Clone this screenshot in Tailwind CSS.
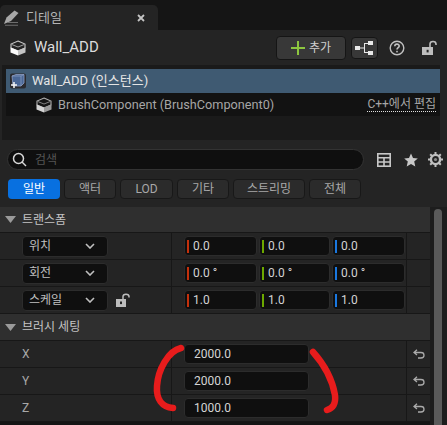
<!DOCTYPE html>
<html lang="ko">
<head>
    <meta charset="UTF-8" />
    <script src="https://cdn.jsdelivr.net/npm/@tailwindcss/browser@4"></script>
    <title>디테일</title>
</head>
<body class="bg-[#151515] text-[#c0c0c0] font-['Roboto','Noto_Sans_CJK_KR',sans-serif] text-[12px] overflow-hidden">
<div class="relative w-[447px] h-[425px] overflow-hidden">

    <!-- 탭 -->
    <div class="h-[30px] pt-[5px]">
        <div class="w-[158px] h-[25px] bg-[#242424] rounded-t-[5px] flex items-center pl-[3px] pr-[13px]">
            <svg width="16" height="16" viewBox="0 0 16 16" fill="#a8a8a8">
                <path d="M11.5 0.5 L15.5 3 L8 11 L1 14 L3.5 7.5 Z"/>
                <path d="M4 12 H15 V13 H4 Z M2 14.8 H15 V15.8 H2 Z" fill="#6e6e6e"/>
            </svg>
            <span class="ml-[7px] text-[13px] text-[#b4b4b4]">디테일</span>
            <svg width="8" height="8" viewBox="0 0 8 8" class="ml-auto" stroke="#c4c4c4" stroke-width="1.8"><path d="M1 1 L7 7 M7 1 L1 7"/></svg>
        </div>
    </div>

    <!-- 액터 헤더 -->
    <div class="h-[35px] bg-[#242424] flex items-center pl-[10px] pr-[9px]">
        <svg width="16" height="16" viewBox="0 0 16 16">
            <path d="M8 1 L15 4 V8 L8 11 L1 8 V4 Z" fill="#242424" stroke="#c8c8c8" stroke-width="1.1"/>
            <path d="M1.5 4.4 L8 7 L14.5 4.4" fill="none" stroke="#a0a0a0" stroke-width="1"/>
            <path d="M0.5 7.5 L8 10.5 V15.5 L0.5 12.4 Z" fill="#fafafa"/>
            <path d="M15.5 7.5 L8 10.5 V15.5 L15.5 12.4 Z" fill="#c4c4c4"/>
        </svg>
        <span class="ml-[8px] text-[15px] text-[#dcdcdc]">Wall_ADD</span>
        <div class="ml-auto flex items-center">
            <div class="w-[70px] h-[24px] bg-[#383838] border border-[#151515] rounded-[4px] flex items-center justify-center gap-[4px] text-[#d0d0d0]">
                <svg width="14" height="14" viewBox="0 0 14 14" fill="#8dc63f"><path d="M6 0 H8 V6 H14 V8 H8 V14 H6 V8 H0 V6 H6 Z"/></svg>
                <span class="text-[12px]">추가</span>
            </div>
            <div class="ml-[5px] w-[27px] h-[22px] bg-[#383838] border border-[#151515] rounded-[4px] flex items-center justify-center">
                <svg width="20" height="14" viewBox="0 0 20 14" fill="#e8e8e8">
                    <rect x="0" y="5" width="5" height="4"/><rect x="13" y="0" width="5" height="4"/><rect x="13" y="10" width="5" height="4"/>
                    <path d="M5 6.5 H9 V2 H13 V3 H10 V11 H13 V12 H9 V7.5 H5 Z"/>
                </svg>
            </div>
            <svg width="16" height="16" viewBox="0 0 16 16" class="ml-[11px]" fill="none" stroke="#c0c0c0" stroke-width="1.4">
                <circle cx="8" cy="8" r="6.8"/>
                <path d="M5.8 6.2 C5.8 3.4 10.2 3.4 10.2 6.1 C10.2 7.7 8 7.8 8 9.6" stroke-width="1.6"/>
                <rect x="7.2" y="10.8" width="1.6" height="1.6" fill="#c0c0c0" stroke="none"/>
            </svg>
            <svg width="16" height="16" viewBox="0 0 16 16" class="ml-[17px]">
                <rect x="0" y="7" width="11" height="8" fill="#bdbdbd"/>
                <rect x="4.6" y="9.8" width="2" height="2.6" fill="#242424"/>
                <path d="M8 7 V4 C8 0.6 14 0.6 14 4 V5" fill="none" stroke="#bdbdbd" stroke-width="1.6"/>
            </svg>
        </div>
    </div>

    <!-- 컴포넌트 트리 -->
    <div class="h-[75px] bg-[#242424] pl-[2px] pr-[7px]">
        <div class="h-[75px] bg-[#1a1a1a] pt-[4px] pl-[4px]">
            <div class="h-[24px] bg-[#3f5a72] flex items-center pl-[4px] text-[#e4e4e4]">
                <svg width="16" height="16" viewBox="0 0 16 16">
                    <rect x="0" y="0.5" width="16" height="15" rx="2" fill="#2a2a2e"/>
                    <path d="M2 3 L6 1.5 H14 V10 L11 13 H3 Z" fill="#4a6796" stroke="#8ea0c4" stroke-width="0.8"/>
                    <path d="M2 3 H11 V13 M11 3 L14 1.5" fill="none" stroke="#8ea0c4" stroke-width="0.7"/>
                    <path d="M1 12 H7 M4 9 V15" stroke="#f6f6f6" stroke-width="1.5"/>
                </svg>
                <span class="ml-[6px] text-[13px]">Wall_ADD (인스턴스)</span>
            </div>
            <div class="h-[23px] bg-[#121212] flex items-center pl-[30px] pr-[4px] text-[#a6a6a6]">
                <svg width="16" height="16" viewBox="0 0 16 16">
                    <path d="M8 1 L15 4 V8 L8 11 L1 8 V4 Z" fill="#151515" stroke="#b0b0b0" stroke-width="1.1"/>
                    <path d="M1.5 4.4 L8 7 L14.5 4.4" fill="none" stroke="#808080" stroke-width="1"/>
                    <path d="M0.5 7.5 L8 10.5 V15.5 L0.5 12.4 Z" fill="#d4d4d4"/>
                    <path d="M15.5 7.5 L8 10.5 V15.5 L15.5 12.4 Z" fill="#9a9a9a"/>
                </svg>
                <span class="ml-[6px] text-[12.7px]">BrushComponent (BrushComponent0)</span>
                <span class="ml-auto text-[12px] border-b border-dotted border-[#e0e0e0] leading-[14px]">C++에서 편집</span>
            </div>
        </div>
    </div>

    <!-- 검색 -->
    <div class="h-[39px] bg-[#242424] flex items-center pl-[7px] pr-[3px]">
        <div class="w-[357px] h-[21px] bg-[#0f0f0f] border border-[#333] rounded-full flex items-center pl-[4px]">
            <svg width="15" height="15" viewBox="0 0 15 15" fill="none" stroke="#d8d8d8" stroke-width="1.5">
                <circle cx="6.5" cy="6.5" r="5"/><path d="M10 10 L14 14"/>
            </svg>
            <span class="ml-[8px] text-[#555] text-[12px]">검색</span>
        </div>
        <svg width="14" height="14" viewBox="0 0 14 14" class="ml-[13px]" fill="none" stroke="#c8c8c8" stroke-width="1.6">
            <rect x="0.8" y="0.8" width="12.4" height="12.4"/>
            <path d="M0.8 4.8 H13.2 M0.8 9 H13.2 M7 4.8 V13.2"/>
        </svg>
        <svg width="14" height="14" viewBox="0 0 14 14" class="ml-[13px]" fill="#c8c8c8">
            <path d="M7 0.5 L9 5 L13.8 5.4 L10.2 8.6 L11.3 13.4 L7 10.9 L2.7 13.4 L3.8 8.6 L0.2 5.4 L5 5 Z"/>
        </svg>
        <svg width="15" height="15" viewBox="0 0 15 15" class="ml-[10px]" fill="none" stroke="#c0c0c0">
            <circle cx="7.5" cy="7.5" r="4.6" stroke-width="2.4"/>
            <circle cx="7.5" cy="7.5" r="1.6" fill="#8a8a8a" stroke="none"/>
            <path d="M7.5 0 V2.5 M7.5 12.5 V15 M0 7.5 H2.5 M12.5 7.5 H15 M2.2 2.2 L4 4 M11 11 L12.8 12.8 M12.8 2.2 L11 4 M4 11 L2.2 12.8" stroke-width="2"/>
        </svg>
    </div>

    <!-- 필터 -->
    <div class="h-[28px] bg-[#242424] pl-[8px] flex items-start gap-[4px] text-[12px] text-[#a8a8a8]">
        <div class="w-[52px] h-[20px] bg-[#0870e0] rounded-[4px] text-white flex items-center justify-center">일반</div>
        <div class="w-[52px] h-[20px] bg-[#2b2b2b] border border-[#181818] rounded-[4px] flex items-center justify-center">액터</div>
        <div class="w-[53px] h-[20px] bg-[#2b2b2b] border border-[#181818] rounded-[4px] flex items-center justify-center">LOD</div>
        <div class="w-[52px] h-[20px] bg-[#2b2b2b] border border-[#181818] rounded-[4px] flex items-center justify-center">기타</div>
        <div class="w-[72px] h-[20px] bg-[#2b2b2b] border border-[#181818] rounded-[4px] flex items-center justify-center">스트리밍</div>
        <div class="w-[52px] h-[20px] bg-[#2b2b2b] border border-[#181818] rounded-[4px] flex items-center justify-center">전체</div>
    </div>

    <!-- 프로퍼티 -->
    <div class="flex h-[218px]">
        <div class="w-[430px]">
            <div class="h-[26px] bg-[#2f2f2f] border-b border-[#171717] flex items-center pl-[5px] text-[#c4c4c4]">
                <svg width="11" height="7" viewBox="0 0 11 7" fill="#9a9a9a"><path d="M0 0 H11 L5.5 7 Z"/></svg>
                <span class="ml-[6px]">트랜스폼</span>
            </div>

            <div class="h-[27px] bg-[#242424] border-b border-[#171717] flex">
                <div class="w-[172px] border-r border-[#171717] pl-[22px] flex items-center">
                    <div class="w-[86px] h-[21px] bg-[#0f0f0f] border border-[#2c2c2c] rounded-[4px] flex items-center justify-between pl-[6px] pr-[12px]">
                        <span>위치</span>
                        <svg width="10" height="6" viewBox="0 0 10 6" fill="none" stroke="#c0c0c0" stroke-width="1.6"><path d="M1 1 L5 5 L9 1"/></svg>
                    </div>
                </div>
                <div class="w-[235px] border-r border-[#171717] pl-[12px] flex items-center gap-[2px] text-[#d4d4d4]">
                    <div class="w-[73px] h-[20px] bg-[#0f0f0f] border border-[#2c2c2c] rounded-[4px] flex items-center pl-[2px]"><i class="w-[2px] h-[13px] bg-[#c4300c]"></i><span class="ml-[4px]">0.0</span></div>
                    <div class="w-[71px] h-[20px] bg-[#0f0f0f] border border-[#2c2c2c] rounded-[4px] flex items-center pl-[2px]"><i class="w-[2px] h-[13px] bg-[#6ca800]"></i><span class="ml-[4px]">0.0</span></div>
                    <div class="w-[73px] h-[20px] bg-[#0f0f0f] border border-[#2c2c2c] rounded-[4px] flex items-center pl-[2px]"><i class="w-[2px] h-[13px] bg-[#1a78e0]"></i><span class="ml-[4px]">0.0</span></div>
                </div>
            </div>

            <div class="h-[27px] bg-[#242424] border-b border-[#171717] flex">
                <div class="w-[172px] border-r border-[#171717] pl-[22px] flex items-center">
                    <div class="w-[86px] h-[21px] bg-[#0f0f0f] border border-[#2c2c2c] rounded-[4px] flex items-center justify-between pl-[6px] pr-[12px]">
                        <span>회전</span>
                        <svg width="10" height="6" viewBox="0 0 10 6" fill="none" stroke="#c0c0c0" stroke-width="1.6"><path d="M1 1 L5 5 L9 1"/></svg>
                    </div>
                </div>
                <div class="w-[235px] border-r border-[#171717] pl-[12px] flex items-center gap-[2px] text-[#d4d4d4]">
                    <div class="w-[73px] h-[20px] bg-[#0f0f0f] border border-[#2c2c2c] rounded-[4px] flex items-center pl-[2px]"><i class="w-[2px] h-[13px] bg-[#c4300c]"></i><span class="ml-[4px]">0.0 °</span></div>
                    <div class="w-[71px] h-[20px] bg-[#0f0f0f] border border-[#2c2c2c] rounded-[4px] flex items-center pl-[2px]"><i class="w-[2px] h-[13px] bg-[#6ca800]"></i><span class="ml-[4px]">0.0 °</span></div>
                    <div class="w-[73px] h-[20px] bg-[#0f0f0f] border border-[#2c2c2c] rounded-[4px] flex items-center pl-[2px]"><i class="w-[2px] h-[13px] bg-[#1a78e0]"></i><span class="ml-[4px]">0.0 °</span></div>
                </div>
            </div>

            <div class="h-[27px] bg-[#242424] border-b border-[#171717] flex">
                <div class="w-[172px] border-r border-[#171717] pl-[22px] flex items-center">
                    <div class="w-[86px] h-[21px] bg-[#0f0f0f] border border-[#2c2c2c] rounded-[4px] flex items-center justify-between pl-[6px] pr-[12px]">
                        <span>스케일</span>
                        <svg width="10" height="6" viewBox="0 0 10 6" fill="none" stroke="#c0c0c0" stroke-width="1.6"><path d="M1 1 L5 5 L9 1"/></svg>
                    </div>
                    <svg width="14" height="14" viewBox="0 0 14 14" class="ml-[8px]">
                        <rect x="0" y="6" width="10" height="8" fill="#bdbdbd"/>
                        <rect x="4" y="8.5" width="2" height="2.6" fill="#242424"/>
                        <path d="M7 6 V3.5 C7 0.4 13 0.4 13 3.5 V4.5" fill="none" stroke="#bdbdbd" stroke-width="1.5"/>
                    </svg>
                </div>
                <div class="w-[235px] border-r border-[#171717] pl-[12px] flex items-center gap-[2px] text-[#d4d4d4]">
                    <div class="w-[73px] h-[20px] bg-[#0f0f0f] border border-[#2c2c2c] rounded-[4px] flex items-center pl-[2px]"><i class="w-[2px] h-[13px] bg-[#c4300c]"></i><span class="ml-[4px]">1.0</span></div>
                    <div class="w-[71px] h-[20px] bg-[#0f0f0f] border border-[#2c2c2c] rounded-[4px] flex items-center pl-[2px]"><i class="w-[2px] h-[13px] bg-[#6ca800]"></i><span class="ml-[4px]">1.0</span></div>
                    <div class="w-[73px] h-[20px] bg-[#0f0f0f] border border-[#2c2c2c] rounded-[4px] flex items-center pl-[2px]"><i class="w-[2px] h-[13px] bg-[#1a78e0]"></i><span class="ml-[4px]">1.0</span></div>
                </div>
            </div>

            <div class="h-[27px] bg-[#2f2f2f] border-b border-[#171717] flex items-center pl-[5px] text-[#c4c4c4]">
                <svg width="11" height="7" viewBox="0 0 11 7" fill="#9a9a9a"><path d="M0 0 H11 L5.5 7 Z"/></svg>
                <span class="ml-[6px]">브러시 세팅</span>
            </div>

            <div class="h-[27px] bg-[#242424] border-b border-[#171717] flex">
                <div class="w-[172px] border-r border-[#171717] pl-[22px] flex items-center text-[#a8a8a8]">X</div>
                <div class="w-[235px] border-r border-[#171717] pl-[12px] flex items-center text-[#d4d4d4]">
                    <div class="w-[125px] h-[20px] bg-[#0f0f0f] border border-[#2c2c2c] rounded-[4px] flex items-center pl-[9px]">2000.0</div>
                </div>
                <div class="flex-1 flex items-center justify-center">
                    <svg width="12" height="10" viewBox="0 0 12 10" fill="none" stroke="#aaaaaa" stroke-width="1.3"><path d="M4 0.8 L1 3.5 L4 6 M1 3.5 H8 C12 3.5 12 9 8 9 H5"/></svg>
                </div>
            </div>
            <div class="h-[27px] bg-[#242424] border-b border-[#171717] flex">
                <div class="w-[172px] border-r border-[#171717] pl-[22px] flex items-center text-[#a8a8a8]">Y</div>
                <div class="w-[235px] border-r border-[#171717] pl-[12px] flex items-center text-[#d4d4d4]">
                    <div class="w-[125px] h-[20px] bg-[#0f0f0f] border border-[#2c2c2c] rounded-[4px] flex items-center pl-[9px]">2000.0</div>
                </div>
                <div class="flex-1 flex items-center justify-center">
                    <svg width="12" height="10" viewBox="0 0 12 10" fill="none" stroke="#aaaaaa" stroke-width="1.3"><path d="M4 0.8 L1 3.5 L4 6 M1 3.5 H8 C12 3.5 12 9 8 9 H5"/></svg>
                </div>
            </div>
            <div class="h-[27px] bg-[#242424] border-b border-[#171717] flex">
                <div class="w-[172px] border-r border-[#171717] pl-[22px] flex items-center text-[#a8a8a8]">Z</div>
                <div class="w-[235px] border-r border-[#171717] pl-[12px] flex items-center text-[#d4d4d4]">
                    <div class="w-[125px] h-[20px] bg-[#0f0f0f] border border-[#2c2c2c] rounded-[4px] flex items-center pl-[9px]">1000.0</div>
                </div>
                <div class="flex-1 flex items-center justify-center">
                    <svg width="12" height="10" viewBox="0 0 12 10" fill="none" stroke="#aaaaaa" stroke-width="1.3"><path d="M4 0.8 L1 3.5 L4 6 M1 3.5 H8 C12 3.5 12 9 8 9 H5"/></svg>
                </div>
            </div>
        </div>
        <!-- 스크롤바 -->
        <div class="flex-1 bg-[#1d1d1d] pl-[4px] pt-[2px]">
            <div class="w-[8px] h-[216px] bg-[#5a5a5a] rounded-t-[4px]"></div>
        </div>
    </div>

    <!-- 빨간 표시 -->
    <svg class="absolute left-0 top-0 pointer-events-none" width="447" height="425" fill="none" stroke="#e81c1c" stroke-width="6.5" stroke-linecap="round" stroke-linejoin="round">
        <path d="M181 348 C168 351 158 370 157 386 C156 399 162 407 173 408"/>
        <path d="M313 352 C322 362 332 378 335 395 C336 404 333 408 327 410"/>
    </svg>
</div>
</body>
</html>
